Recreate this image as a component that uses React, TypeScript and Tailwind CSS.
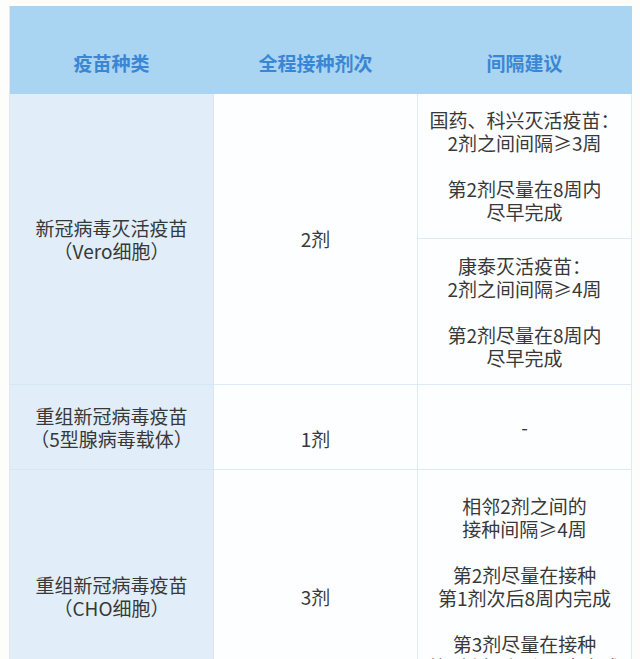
const rows3a = ["国药、科兴灭活疫苗：", "2剂之间间隔≥3周", "", "第2剂尽量在8周内", "尽早完成"];
const rows3b = ["康泰灭活疫苗：", "2剂之间间隔≥4周", "", "第2剂尽量在8周内", "尽早完成"];
const rowsCho = [
  "相邻2剂之间的",
  "接种间隔≥4周",
  "",
  "第2剂尽量在接种",
  "第1剂次后8周内完成",
  "",
  "第3剂尽量在接种",
  "第1剂次后6个月内完成",
];

function Lines({ items }: { items: string[] }) {
  return (
    <>
      {items.map((t, i) => (
        <div key={i} className="h-[23px] whitespace-nowrap">
          {t}
        </div>
      ))}
    </>
  );
}

const head = "h-[88px] align-top pt-[45px] text-center font-bold text-[19px] leading-[23px] text-[#3b86d4] border-r border-[#a9d4f2]";
const kind = "bg-[#e1eef9] text-center align-middle border-b border-r border-[#d5e7f5]";
const cell = "text-center align-middle border-b border-r border-[#dcebf6] bg-[#fdfeff]";

export default function App() {
  return (
    <div
      className="min-h-[659px] w-[640px] overflow-hidden bg-[#fdfdfc] pt-[6px] pl-[9px] text-[19px] leading-[23px] text-[#383838]"
      style={{ fontFamily: '"Noto Sans CJK SC", "Noto Sans", sans-serif' }}
    >
      <table className="w-[622px] table-fixed border-collapse border-l border-[#e4e8ec]">
        <colgroup>
          <col className="w-[204px]" />
          <col className="w-[204px]" />
          <col className="w-[214px]" />
        </colgroup>
        <thead>
          <tr className="bg-[#a9d4f2]">
            <th className={head}>疫苗种类</th>
            <th className={head}>全程接种剂次</th>
            <th className={head}>间隔建议</th>
          </tr>
        </thead>
        <tbody>
          <tr className="h-[144px]">
            <td rowSpan={2} className={kind}>
              新冠病毒灭活疫苗
              <br />
              （Vero细胞）
            </td>
            <td rowSpan={2} className={cell}>
              2剂
            </td>
            <td className={cell}>
              <Lines items={rows3a} />
            </td>
          </tr>
          <tr className="h-[146px]">
            <td className={cell}>
              <Lines items={rows3b} />
            </td>
          </tr>
          <tr className="h-[85px]">
            <td className={kind}>
              重组新冠病毒疫苗
              <br />
              （5型腺病毒载体）
            </td>
            <td className={`${cell} pt-[24px]`}>1剂</td>
            <td className={cell}>-</td>
          </tr>
          <tr className="h-[254px]">
            <td className={kind}>
              重组新冠病毒疫苗
              <br />
              （CHO细胞）
            </td>
            <td className={cell}>3剂</td>
            <td className={`${cell} !align-top pt-[24px]`}>
              <Lines items={rowsCho} />
            </td>
          </tr>
        </tbody>
      </table>
    </div>
  );
}
